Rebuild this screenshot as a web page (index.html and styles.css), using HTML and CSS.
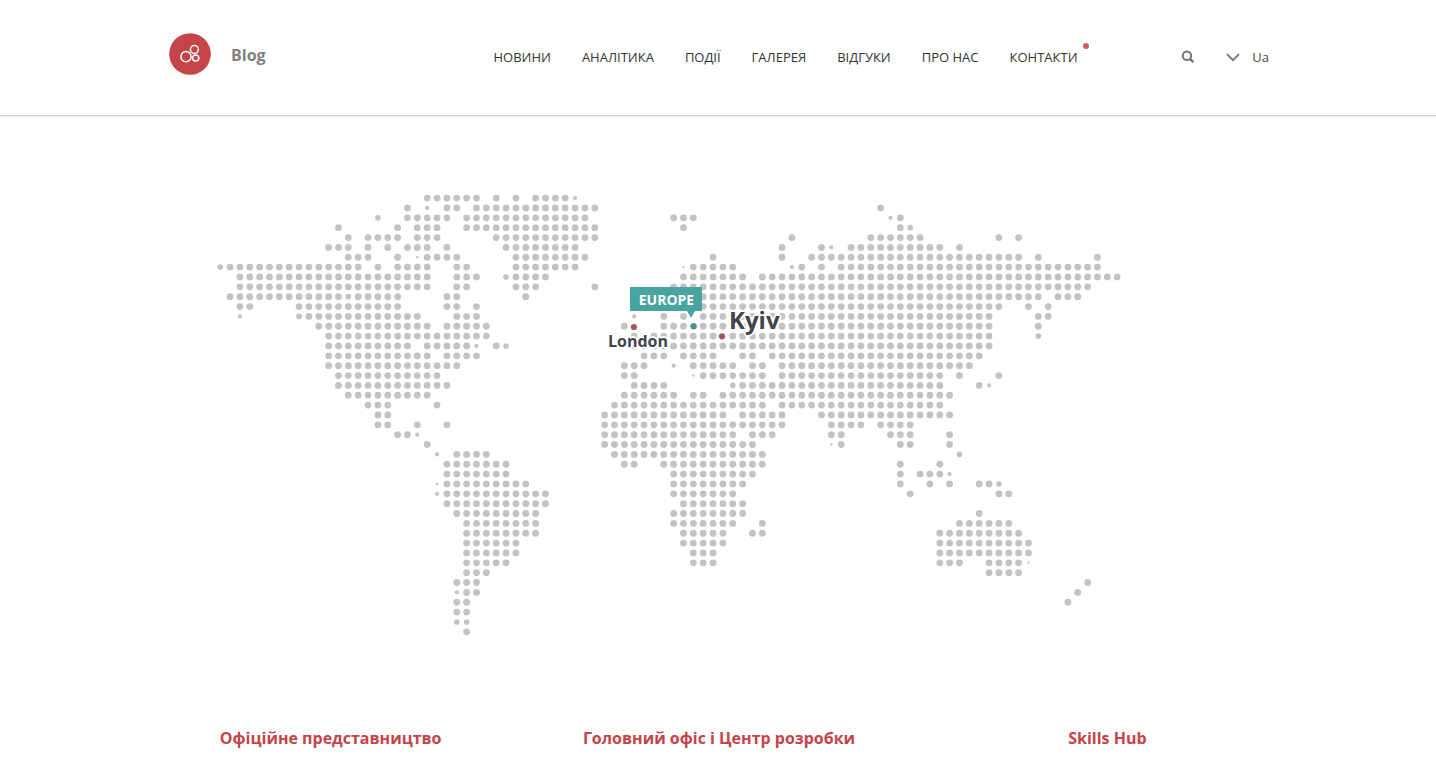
FILE: index.html
```html
<!DOCTYPE html>
<html lang="uk">
<head>
<meta charset="utf-8">
<title>Контакти</title>
<link rel="stylesheet" href="styles.css">
</head>
<body>
<header class="header">
  <div class="header-inner">
    <a class="brand">
      <svg class="logo" viewBox="0 0 42 42" width="42" height="42">
        <circle cx="21" cy="21" r="20.8" fill="#c44448"/>
        <g fill="none" stroke="#fff" stroke-width="1.5">
          <circle cx="17" cy="23.7" r="5.1"/>
          <circle cx="25.4" cy="16.5" r="4"/>
          <circle cx="26.7" cy="25" r="3.1"/>
        </g>
      </svg>
      <span class="brand-name">Blog</span>
    </a>
    <nav class="nav">
      <a>НОВИНИ</a>
      <a>АНАЛІТИКА</a>
      <a>ПОДІЇ</a>
      <a>ГАЛЕРЕЯ</a>
      <a>ВІДГУКИ</a>
      <a>ПРО НАС</a>
      <a class="current">КОНТАКТИ</a>
    </nav>
    <svg class="search" viewBox="0 0 14 14" width="14" height="14" fill="none" stroke="#737378" stroke-width="2">
      <circle cx="6" cy="5.8" r="4.2"/><path d="M8.8 8.8L12.4 12.2" stroke-width="2.4"/>
    </svg>
    <div class="lang">
      <svg viewBox="0 0 14 9" width="14" height="9" fill="none" stroke="#737378" stroke-width="1.8"><path d="M1 1.2L7 7.2L13 1.2"/></svg>
      <span>Ua</span>
    </div>
  </div>
</header>
<main>
  <section class="map">
    <svg class="dots" id="dots" viewBox="0 0 910 450" width="910" height="450"></svg>
    <span class="place london">London</span>
    <span class="place kyiv">Kyiv</span>
    <svg class="dots pins" id="pins" viewBox="0 0 910 450" width="910" height="450"></svg>
    <span class="region">EUROPE</span>
  </section>
  <section class="offices">
    <h2>Офіційне представництво</h2>
    <h2>Головний офіс і Центр розробки</h2>
    <h2>Skills Hub</h2>
  </section>
</main>
<script src="map.js"></script>
</body>
</html>
```
FILE: styles.css
```css
body {
  margin: 0;
  height: 775px;
  overflow: hidden;
  background: #fff;
  font-family: "Open Sans", "Noto Sans", sans-serif;
  color: #333;
}
.header {
  height: 115px;
  border-bottom: 1px solid #d2d2d2;
  box-shadow: 0 1px 1px #f0f0f0;
}
.header-inner {
  box-sizing: border-box;
  width: 1102px;
  height: 114px;
  margin: 0 auto;
  padding: 0 0 0 2px;
  display: flex;
  align-items: center;
}
.brand {
  display: flex;
  align-items: center;
  width: 324px;
  gap: 20px;
}
.logo {
  margin-top: -6px;
}
.brand-name {
  font-size: 16px;
  font-weight: 700;
  line-height: 22px;
  color: #808080;
  margin-top: -4px;
}
.nav {
  display: flex;
  gap: 31px;
  width: 689px;
  margin-left: 1px;
  font-size: 13px;
  line-height: 20px;
  white-space: nowrap;
}
.current {
  position: relative;
}
.current::after {
  content: "";
  position: absolute;
  top: -4px;
  right: -11px;
  width: 6px;
  height: 6px;
  border-radius: 50%;
  background: #d05c62;
}
.search {
  flex: none;
}
.lang {
  display: flex;
  align-items: center;
  gap: 12px;
  margin-left: 31px;
  font-size: 13px;
  line-height: 20px;
  color: #4a4a4f;
}
.map {
  position: relative;
  width: 910px;
  height: 450px;
  margin: 74px 0 0 215px;
}
.dots {
  display: block;
}
.pins {
  position: absolute;
  left: 0;
  top: 0;
}
.place {
  position: absolute;
  font-weight: 700;
  color: #43434b;
  text-shadow: 0 0 3px #fff, 0 0 2px #fff, 2px 0 0 #fff, -2px 0 0 #fff, 0 2px 0 #fff, 0 -2px 0 #fff, 1px 1px 0 #fff, -1px -1px 0 #fff, 1px -1px 0 #fff, -1px 1px 0 #fff;
}
.london {
  left: 393px;
  top: 140px;
  font-size: 16px;
  line-height: 22px;
}
.kyiv {
  left: 514px;
  top: 114px;
  font-size: 24px;
  line-height: 32px;
}
.region {
  position: absolute;
  left: 415px;
  top: 97px;
  box-sizing: border-box;
  width: 72px;
  height: 24px;
  padding-left: 1px;
  background: #48a49f;
  color: #fff;
  font-size: 14px;
  font-weight: 700;
  line-height: 25px;
  text-align: center;
}
.region::after {
  content: "";
  position: absolute;
  left: 57px;
  top: 24px;
  border: solid transparent;
  border-width: 7px 4px 0;
  border-top-color: #48a49f;
}
.offices {
  display: grid;
  grid-template-columns: repeat(3, 1fr);
  width: 1165px;
  margin: 87px auto 0;
  padding-left: 2px;
  text-align: center;
}
.offices h2 {
  margin: 0;
  font-size: 16px;
  line-height: 22px;
  font-weight: 700;
  color: #c44448;
}
```
FILE: map.js
```js
// Each row lists columns or column ranges; the suffix m, s or x marks a smaller dot.
const rows = [
  "21-26 28 30 32-35 36s",
  "19 21s 23-24 26-38 67",
  "16m 19-23 25-37 46-48 68s 69",
  "12 18 20-22 25-38 47 69 70m",
  "13 15-18 20-22 28-38 58 66-71 79 81",
  "11-13 15 17 19-21 23 29-36 57 61 62s 64-73 75",
  "13-15 18 20x 21-24 30-37 50 57 60-81 83 89",
  "0m 1-14 16 18-21 24-25 30-36 47x 48-52 58s 59 61 63-89",
  "2-21 24-26 29m 30-33 47-53 55-91",
  "2-21 24-25 30-32 38 46-88",
  "1-12 13m 14-18 23-24 31 49-83 85-87",
  "2-3 8-18 23-24 26 49-79 82 84",
  "2s 8m 9-20 24-26 42s 45 47 49-78 83-84",
  "10-21 23-27 41 45-47 49-78 83",
  "11-27 42 44-50 52-78 83m",
  "11-19 21-25 26s 28 29m 42-78",
  "11-21 23-26 43-45 47-50 53-54 56-77",
  "11-24 41-43 46s 48-52 54-55 57-76",
  "12-22 41-42 48x 49-55 57-73 75 79",
  "12-23 42-45 52m 53-73 77 78s",
  "13-21 41-46 48-49 51-74",
  "15-17 22 40-55 57-73",
  "16-17 39-51 53-57 61-74",
  "16-17 20 23 39-57 62-65 67-70",
  "18-19 20s 39-52 54-56 62-63 68-70 74",
  "21 39-54 62x 63 69-70 74",
  "22s 24-27 40-55 75m",
  "23-29 41-42 45-55 69 73",
  "23-29 46-54 69 71-73 74s",
  "22x 23-31 46-53 69 72 74 77-78 79m",
  "22s 23-33 46-52 70 79-80",
  "23-33 47-53",
  "24-32 46-53 77",
  "25-32 46-52 55 75-80",
  "25-32 47-51 54-55 73-81",
  "25-30 47-51 73-82",
  "25-30 48-50 73-82",
  "25-29 48-50 73-75 78-81 82x",
  "25-27 78-81",
  "24-26 88",
  "24s 25-26 87",
  "24-25 86",
  "24-25",
  "24m 25m",
  "25"
];
const radius = { "": 3.4, m: 2.8, s: 2.1, x: 1.2 };
const pitch = 9.857;
const dots = document.getElementById("dots");
const pins = document.getElementById("pins");

function dot(svg, x, y, r, fill) {
  const c = document.createElementNS("http://www.w3.org/2000/svg", "circle");
  c.setAttribute("cx", x.toFixed(2));
  c.setAttribute("cy", y.toFixed(2));
  c.setAttribute("r", r);
  c.setAttribute("fill", fill);
  svg.appendChild(c);
}

rows.forEach((row, y) => {
  for (const item of row.split(" ")) {
    const [, a, b, size] = item.match(/^(\d+)(?:-(\d+))?([msx]?)$/);
    for (let x = +a; x <= +(b || a); x++) {
      dot(dots, 5.2 + x * pitch, 8.1 + y * pitch, radius[size], "#c7c2c2");
    }
  }
});

// City and region pins
dot(pins, 418.9, 137, 3.1, "#a8555a");
dot(pins, 478.6, 136.3, 3.2, "#4f918d");
dot(pins, 507, 146.3, 3.1, "#a8555a");
```
